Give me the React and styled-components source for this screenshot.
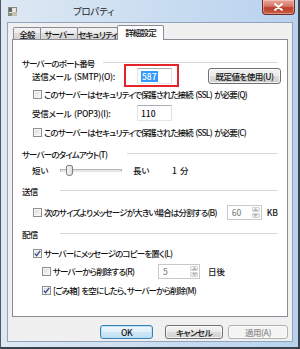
import React from 'react';
import styled, { createGlobalStyle } from 'styled-components';

const GlobalStyle = createGlobalStyle`
  html, body { margin: 0; padding: 0; background: #2b3644; }
  * { box-sizing: border-box; }
  body {
    font-family: "Noto Sans CJK JP", "Noto Sans", sans-serif;
    font-size: 8.5px;
    font-weight: 500;
    letter-spacing: -0.85px;
    word-spacing: 1.2px;
    color: #141414;
    font-feature-settings: "palt";
  }
`;

const Window = styled.div`
  width: 300px;
  height: 349px;
  display: flex;
  flex-direction: column;
  background: linear-gradient(90deg, #dde8f3 0%, #cddff1 45%, #b8d2ee 100%);
  border-left: 1px solid #4d5866;
  border-right: 2px solid #39424d;
  border-bottom: 2px solid #39424d;
`;

const TitleBar = styled.div`
  height: 22px;
  flex: none;
  display: flex;
  align-items: center;
`;

const AppIcon = styled.svg`
  margin-left: 7px;
  flex: none;
`;

const Title = styled.div`
  margin-left: 55px;
  font-size: 9.5px;
  font-weight: 400;
  letter-spacing: -0.3px;
  color: #1b1b1b;
`;

const CloseButton = styled.div`
  margin-left: auto;
  margin-right: 3px;
  align-self: flex-start;
  width: 33px;
  height: 15px;
  border: 1px solid #6e2a24;
  border-top: none;
  border-radius: 0 0 4px 4px;
  background: linear-gradient(#e8a89a 0%, #d47563 45%, #b9402c 55%, #cc5c44 100%);
  box-shadow: inset 0 0 0 1px rgba(255, 220, 210, 0.45);
  display: flex;
  align-items: center;
  justify-content: center;
`;

const Frame = styled.div`
  flex: 1;
  display: flex;
  padding: 0 5px 5px 6px;
`;

const Client = styled.div`
  flex: 1;
  background: #f0f0f0;
  border: 1px solid #91a4bb;
  padding: 2px 4px 0 4px;
  display: flex;
  flex-direction: column;
`;

const TabStrip = styled.div`
  display: flex;
  align-items: flex-end;
  height: 15px;
  padding-left: 1px;
  position: relative;
  z-index: 1;
`;

const Tab = styled.div`
  width: ${(p) => p.$w}px;
  height: ${(p) => (p.$active ? 15 : 12)}px;
  margin-bottom: ${(p) => (p.$active ? 0 : 1)}px;
  margin-left: ${(p) => (p.$first ? 0 : -1)}px;
  border: 1px solid #898c95;
  border-bottom: none;
  border-radius: 2px 2px 0 0;
  background: ${(p) =>
    p.$active ? '#ffffff' : 'linear-gradient(#f3f3f3 0%, #ebebeb 50%, #dddddd 50%, #d4d4d4 100%)'};
  display: flex;
  align-items: center;
  justify-content: center;
  padding-bottom: ${(p) => (p.$active ? 2 : 0)}px;
  position: relative;
  z-index: ${(p) => (p.$active ? 2 : 1)};
  white-space: nowrap;
`;

const Panel = styled.div`
  width: 276px;
  height: 278px;
  margin-top: -1px;
  background: #ffffff;
  border: 1px solid #898c95;
  padding: 16px 9px 0 9px;
  display: flex;
  flex-direction: column;
`;

const GroupRow = styled.div`
  display: flex;
  align-items: center;
  height: 13px;
  margin-top: ${(p) => p.$mt || 0}px;
`;

const GroupLabel = styled.span`
  width: ${(p) => p.$lw}px;
  flex: none;
  white-space: nowrap;
`;

const GroupLine = styled.span`
  flex: 1;
  height: 1px;
  background: #d5d9dd;
`;

const FieldRow = styled.div`
  display: flex;
  align-items: center;
  height: 14px;
  margin-top: ${(p) => p.$mt || 0}px;
  margin-left: 10px;
`;

const FieldLabel = styled.span`
  width: 105px;
  flex: none;
  white-space: nowrap;
  letter-spacing: -0.3px;
`;

const TextBox = styled.div`
  width: 35px;
  height: 16px;
  flex: none;
  border: 1px solid;
  border-color: #abadb3 #dbdfe6 #e3e9ef #e2e3ea;
  background: #fff;
  display: flex;
  align-items: center;
  padding-left: 3px;
  letter-spacing: 0;
  position: relative;
`;

const Highlight = styled.div`
  position: absolute;
  left: -14px;
  top: -5px;
  right: -8px;
  bottom: -4px;
  border: 2px solid #e3242b;
  pointer-events: none;
`;

const Selected = styled.span`
  background: #3399ff;
  color: #fff;
  padding: 0 1px;
  line-height: 11px;
`;

const PushButton = styled.button`
  font: inherit;
  letter-spacing: -0.5px;
  width: ${(p) => p.$w}px;
  height: ${(p) => p.$h || 14}px;
  margin-left: ${(p) => p.$ml || 0}px;
  padding: 0;
  flex: none;
  border: 1px solid ${(p) => (p.$default ? '#3c7fb1' : p.disabled ? '#adb2b5' : '#707070')};
  border-radius: 3px;
  background: ${(p) =>
    p.disabled
      ? '#f4f4f4'
      : p.$default
      ? 'linear-gradient(#eef7fd 0%, #e0f0fa 50%, #cfe7f6 50%, #bfdff3 100%)'
      : 'linear-gradient(#f2f2f2 0%, #ebebeb 50%, #dddddd 50%, #cfcfcf 100%)'};
  box-shadow: inset 0 0 0 1px ${(p) => (p.$default ? 'rgba(180,225,248,0.9)' : 'rgba(255,255,255,0.75)')};
  color: ${(p) => (p.disabled ? '#8c8c8c' : '#141414')};
  display: flex;
  align-items: center;
  justify-content: center;
`;

const CheckRow = styled.div`
  display: flex;
  align-items: center;
  height: 14px;
  margin-top: ${(p) => p.$mt || 0}px;
  margin-left: ${(p) => p.$indent}px;
`;

const Box = styled.span`
  width: 9px;
  height: 9px;
  flex: none;
  margin-right: 2px;
  border: 1px solid #8e8f8f;
  background: linear-gradient(135deg, #d6d6d6 0%, #eeeeee 60%, #ffffff 100%);
  box-shadow: inset 0 0 0 1px #f6f6f6;
  display: flex;
  align-items: center;
  justify-content: center;
`;

const CheckText = styled.span`
  white-space: nowrap;
  width: ${(p) => (p.$w ? `${p.$w}px` : 'auto')};
  flex: none;
`;

const Spin = styled.div`
  width: ${(p) => p.$w}px;
  height: 15px;
  flex: none;
  margin-left: ${(p) => (p.$auto ? 'auto' : '0')};
  display: flex;
  border: 1px solid #c6c9ce;
  background: #fff;
  letter-spacing: 0;
`;

const SpinValue = styled.div`
  flex: 1;
  padding-left: 4px;
  display: flex;
  align-items: center;
  color: #8a8a8a;
`;

const SpinButtons = styled.div`
  width: 9px;
  display: flex;
  flex-direction: column;
  gap: 1px;
  padding: 1px 1px 1px 0;
`;

const SpinBtn = styled.div`
  flex: 1;
  display: flex;
  align-items: center;
  justify-content: center;
  border: 1px solid #d4d4d4;
  border-radius: 1px;
  background: linear-gradient(#f7f7f7, #e9e9e9);
`;

const Unit = styled.span`
  margin-left: ${(p) => p.$ml}px;
  white-space: nowrap;
  letter-spacing: 0;
`;

const SliderRow = styled.div`
  display: flex;
  align-items: center;
  height: 14px;
  margin-top: ${(p) => p.$mt || 0}px;
  margin-left: 10px;
`;

const SliderLabel = styled.span`
  width: ${(p) => p.$w}px;
  flex: none;
  white-space: nowrap;
  letter-spacing: 0;
`;

const Track = styled.div`
  width: 62px;
  height: 3px;
  flex: none;
  margin-right: 11px;
  border: 1px solid #b3b3b3;
  border-bottom-color: #e3e3e3;
  background: #e8e8e8;
  position: relative;
`;

const Thumb = styled.div`
  position: absolute;
  left: 5px;
  top: -5px;
  width: 7px;
  height: 11px;
  border: 1px solid #7f7f7f;
  border-radius: 2px 2px 3px 3px;
  background: linear-gradient(90deg, #f7f7f7, #dcdcdc);
`;

const ButtonBar = styled.div`
  display: flex;
  justify-content: flex-end;
  margin-top: 8px;
`;

const Check = ({ checked }) => (
  <Box>
    {checked && (
      <svg width="7" height="7" viewBox="0 0 7 7">
        <path d="M0.8 3.6 L2.6 5.6 L6.2 0.9" fill="none" stroke="#3b4f8c" strokeWidth="1.4" />
      </svg>
    )}
  </Box>
);

const Spinner = ({ w, value, auto }) => (
  <Spin $w={w} $auto={auto}>
    <SpinValue>{value}</SpinValue>
    <SpinButtons>
      <SpinBtn>
        <svg width="5" height="3" viewBox="0 0 5 3">
          <path d="M0 3 L2.5 0 L5 3 Z" fill="#b5b5b5" />
        </svg>
      </SpinBtn>
      <SpinBtn>
        <svg width="5" height="3" viewBox="0 0 5 3">
          <path d="M0 0 L2.5 3 L5 0 Z" fill="#b5b5b5" />
        </svg>
      </SpinBtn>
    </SpinButtons>
  </Spin>
);

export default function App() {
  return (
    <>
      <GlobalStyle />
      <Window>
        <TitleBar>
          <AppIcon width="10" height="11" viewBox="0 0 10 11">
            <rect x="0.5" y="1.5" width="8" height="8" fill="#e9e6dc" stroke="#8c8a80" />
            <rect x="1" y="2" width="3" height="4" fill="#5d6b6a" />
            <rect x="4" y="6" width="5" height="4" fill="#c7c2b0" />
            <rect x="1" y="7" width="3" height="2" fill="#7f9a7a" />
          </AppIcon>
          <Title>プロパティ</Title>
          <CloseButton>
            <svg width="9" height="8" viewBox="0 0 9 8">
              <path d="M1 1 L8 7 M8 1 L1 7" stroke="#fff" strokeWidth="1.8" strokeLinecap="round" />
            </svg>
          </CloseButton>
        </TitleBar>
        <Frame>
          <Client>
            <TabStrip>
              <Tab $w={28} $first>全般</Tab>
              <Tab $w={38}>サーバー</Tab>
              <Tab $w={41}>セキュリティ</Tab>
              <Tab $w={47} $active>詳細設定</Tab>
            </TabStrip>
            <Panel>
              <GroupRow>
                <GroupLabel $lw={81}>サーバーのポート番号</GroupLabel>
                <GroupLine />
              </GroupRow>
              <FieldRow>
                <FieldLabel>送信メール (SMTP)(O):</FieldLabel>
                <TextBox>
                  <Selected>587</Selected>
                  <Highlight />
                </TextBox>
                <PushButton $w={73} $h={16} $ml={36}>既定値を使用(U)</PushButton>
              </FieldRow>
              <CheckRow $mt={4} $indent={11}>
                <Check />
                <CheckText>このサーバーはセキュリティで保護された接続 (SSL) が必要(Q)</CheckText>
              </CheckRow>
              <FieldRow $mt={5}>
                <FieldLabel>受信メール (POP3)(I):</FieldLabel>
                <TextBox>110</TextBox>
              </FieldRow>
              <CheckRow $mt={5} $indent={11}>
                <Check />
                <CheckText>このサーバーはセキュリティで保護された接続 (SSL) が必要(C)</CheckText>
              </CheckRow>
              <GroupRow $mt={8}>
                <GroupLabel $lw={105}>サーバーのタイムアウト(T)</GroupLabel>
                <GroupLine />
              </GroupRow>
              <SliderRow $mt={3}>
                <SliderLabel $w={28}>短い</SliderLabel>
                <Track>
                  <Thumb />
                </Track>
                <SliderLabel $w={39}>長い</SliderLabel>
                <SliderLabel $w={30}>1 分</SliderLabel>
              </SliderRow>
              <GroupRow $mt={7}>
                <GroupLabel $lw={38}>送信</GroupLabel>
                <GroupLine />
              </GroupRow>
              <CheckRow $mt={8} $indent={11}>
                <Check />
                <CheckText>次のサイズよりメッセージが大きい場合は分割する(B)</CheckText>
                <Spinner w={35} value="60" auto />
                <Unit $ml={5}>KB</Unit>
              </CheckRow>
              <GroupRow $mt={8}>
                <GroupLabel $lw={38}>配信</GroupLabel>
                <GroupLine />
              </GroupRow>
              <CheckRow $mt={6} $indent={11}>
                <Check checked />
                <CheckText>サーバーにメッセージのコピーを置く(L)</CheckText>
              </CheckRow>
              <CheckRow $mt={4} $indent={20}>
                <Check />
                <CheckText $w={105}>サーバーから削除する(R)</CheckText>
                <Spinner w={42} value="5" />
                <Unit $ml={8}>日後</Unit>
              </CheckRow>
              <CheckRow $mt={5} $indent={20}>
                <Check checked />
                <CheckText>[ごみ箱] を空にしたら、サーバーから削除(M)</CheckText>
              </CheckRow>
            </Panel>
            <ButtonBar>
              <PushButton $w={53} $default>OK</PushButton>
              <PushButton $w={58} $ml={12}>キャンセル</PushButton>
              <PushButton $w={60} $ml={5} disabled>適用(A)</PushButton>
            </ButtonBar>
          </Client>
        </Frame>
      </Window>
    </>
  );
}
